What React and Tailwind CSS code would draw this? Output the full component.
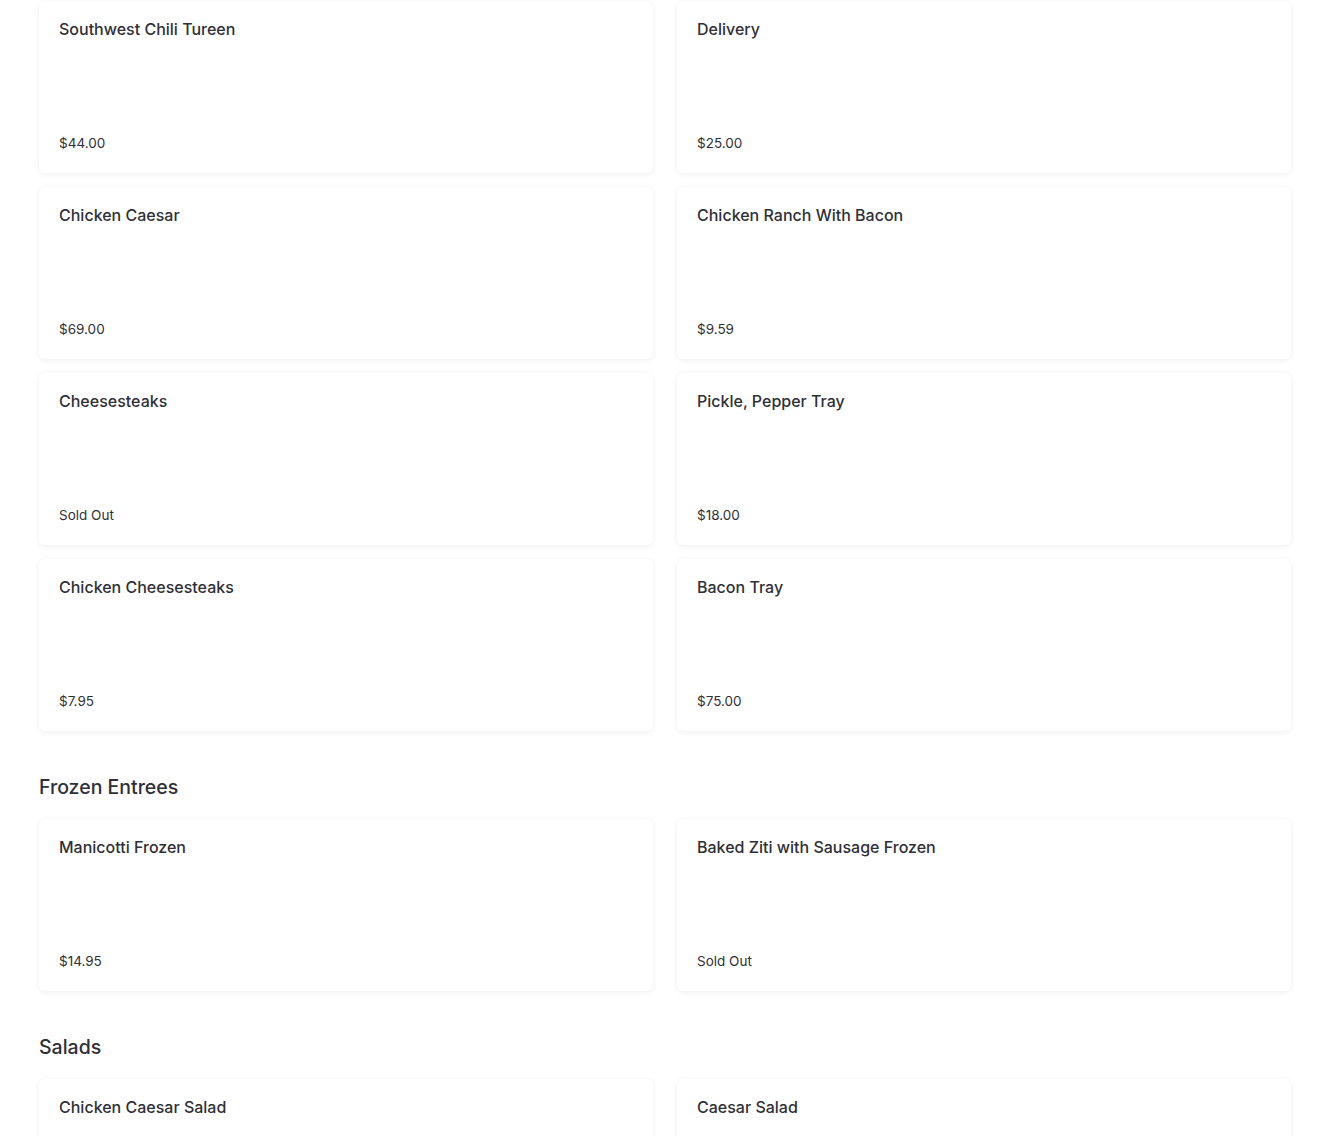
import React from "react";

const sections = [
  {
    title: null,
    items: [
      ["Southwest Chili Tureen", "$44.00"],
      ["Delivery", "$25.00"],
      ["Chicken Caesar", "$69.00"],
      ["Chicken Ranch With Bacon", "$9.59"],
      ["Cheesesteaks", "Sold Out"],
      ["Pickle, Pepper Tray", "$18.00"],
      ["Chicken Cheesesteaks", "$7.95"],
      ["Bacon Tray", "$75.00"],
    ],
  },
  {
    title: "Frozen Entrees",
    items: [
      ["Manicotti Frozen", "$14.95"],
      ["Baked Ziti with Sausage Frozen", "Sold Out"],
    ],
  },
  {
    title: "Salads",
    items: [
      ["Chicken Caesar Salad", ""],
      ["Caesar Salad", ""],
    ],
  },
];

function Card({ name, price }) {
  return (
    <div className="h-[172px] bg-white rounded-md shadow-[0_1px_6px_rgba(0,0,0,0.07)] px-5 pt-[18px] pb-5 flex flex-col justify-between">
      <div className="text-[16px] leading-5 font-medium text-[#2f2f37]">{name}</div>
      <div className="text-[13.5px] leading-5 text-[#2f2f37]">{price}</div>
    </div>
  );
}

export default function App() {
  return (
    <div
      className="min-h-screen bg-white px-[39px] pt-[1px] pb-10"
      style={{ fontFamily: "Inter, 'Liberation Sans', sans-serif" }}
    >
      {sections.map((s, i) => (
        <div key={i}>
          {s.title && (
            <h2 className="mt-[42px] mb-[18px] text-[19.5px] leading-7 font-medium text-[#2f2f37]">
              {s.title}
            </h2>
          )}
          <div className="grid grid-cols-2 gap-x-6 gap-y-[14px]">
            {s.items.map(([n, p]) => (
              <Card key={n} name={n} price={p} />
            ))}
          </div>
        </div>
      ))}
    </div>
  );
}
